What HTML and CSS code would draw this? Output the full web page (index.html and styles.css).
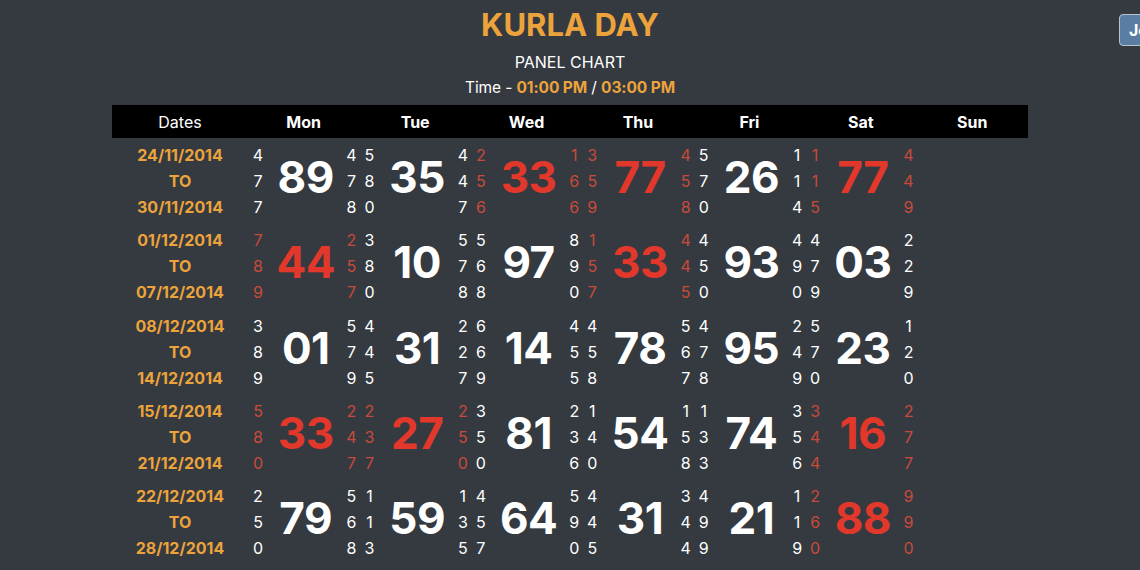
FILE: index.html
```html
<!DOCTYPE html>
<html lang="en">
<head>
<meta charset="utf-8">
<title>Kurla Day Panel Chart</title>
<link rel="stylesheet" href="styles.css">
</head>
<body>
<a class="join-btn" href="#">Join Now</a>
<header class="head">
  <h1 class="title">KURLA DAY</h1>
  <p class="sub">PANEL CHART</p>
  <p class="time">Time - <b>01:00 PM</b> / <b>03:00 PM</b></p>
</header>
<table class="chart">
  <thead>
    <tr><th class="dates-h">Dates</th><th>Mon</th><th>Tue</th><th>Wed</th><th>Thu</th><th>Fri</th><th>Sat</th><th>Sun</th></tr>
  </thead>
  <tbody>
    <tr>
      <td class="date">24/11/2014<br>TO<br>30/11/2014</td>
      <td><div class="cell"><span class="p">4<br>7<br>7</span><span class="j">89</span><span class="p">4<br>7<br>8</span></div></td>
      <td><div class="cell"><span class="p">5<br>8<br>0</span><span class="j">35</span><span class="p">4<br>4<br>7</span></div></td>
      <td><div class="cell red"><span class="p">2<br>5<br>6</span><span class="j">33</span><span class="p">1<br>6<br>6</span></div></td>
      <td><div class="cell red"><span class="p">3<br>5<br>9</span><span class="j">77</span><span class="p">4<br>5<br>8</span></div></td>
      <td><div class="cell"><span class="p">5<br>7<br>0</span><span class="j">26</span><span class="p">1<br>1<br>4</span></div></td>
      <td><div class="cell red"><span class="p">1<br>1<br>5</span><span class="j">77</span><span class="p">4<br>4<br>9</span></div></td>
      <td></td>
    </tr>
    <tr>
      <td class="date">01/12/2014<br>TO<br>07/12/2014</td>
      <td><div class="cell red"><span class="p">7<br>8<br>9</span><span class="j">44</span><span class="p">2<br>5<br>7</span></div></td>
      <td><div class="cell"><span class="p">3<br>8<br>0</span><span class="j">10</span><span class="p">5<br>7<br>8</span></div></td>
      <td><div class="cell"><span class="p">5<br>6<br>8</span><span class="j">97</span><span class="p">8<br>9<br>0</span></div></td>
      <td><div class="cell red"><span class="p">1<br>5<br>7</span><span class="j">33</span><span class="p">4<br>4<br>5</span></div></td>
      <td><div class="cell"><span class="p">4<br>5<br>0</span><span class="j">93</span><span class="p">4<br>9<br>0</span></div></td>
      <td><div class="cell"><span class="p">4<br>7<br>9</span><span class="j">03</span><span class="p">2<br>2<br>9</span></div></td>
      <td></td>
    </tr>
    <tr>
      <td class="date">08/12/2014<br>TO<br>14/12/2014</td>
      <td><div class="cell"><span class="p">3<br>8<br>9</span><span class="j">01</span><span class="p">5<br>7<br>9</span></div></td>
      <td><div class="cell"><span class="p">4<br>4<br>5</span><span class="j">31</span><span class="p">2<br>2<br>7</span></div></td>
      <td><div class="cell"><span class="p">6<br>6<br>9</span><span class="j">14</span><span class="p">4<br>5<br>5</span></div></td>
      <td><div class="cell"><span class="p">4<br>5<br>8</span><span class="j">78</span><span class="p">5<br>6<br>7</span></div></td>
      <td><div class="cell"><span class="p">4<br>7<br>8</span><span class="j">95</span><span class="p">2<br>4<br>9</span></div></td>
      <td><div class="cell"><span class="p">5<br>7<br>0</span><span class="j">23</span><span class="p">1<br>2<br>0</span></div></td>
      <td></td>
    </tr>
    <tr>
      <td class="date">15/12/2014<br>TO<br>21/12/2014</td>
      <td><div class="cell red"><span class="p">5<br>8<br>0</span><span class="j">33</span><span class="p">2<br>4<br>7</span></div></td>
      <td><div class="cell red"><span class="p">2<br>3<br>7</span><span class="j">27</span><span class="p">2<br>5<br>0</span></div></td>
      <td><div class="cell"><span class="p">3<br>5<br>0</span><span class="j">81</span><span class="p">2<br>3<br>6</span></div></td>
      <td><div class="cell"><span class="p">1<br>4<br>0</span><span class="j">54</span><span class="p">1<br>5<br>8</span></div></td>
      <td><div class="cell"><span class="p">1<br>3<br>3</span><span class="j">74</span><span class="p">3<br>5<br>6</span></div></td>
      <td><div class="cell red"><span class="p">3<br>4<br>4</span><span class="j">16</span><span class="p">2<br>7<br>7</span></div></td>
      <td></td>
    </tr>
    <tr>
      <td class="date">22/12/2014<br>TO<br>28/12/2014</td>
      <td><div class="cell"><span class="p">2<br>5<br>0</span><span class="j">79</span><span class="p">5<br>6<br>8</span></div></td>
      <td><div class="cell"><span class="p">1<br>1<br>3</span><span class="j">59</span><span class="p">1<br>3<br>5</span></div></td>
      <td><div class="cell"><span class="p">4<br>5<br>7</span><span class="j">64</span><span class="p">5<br>9<br>0</span></div></td>
      <td><div class="cell"><span class="p">4<br>4<br>5</span><span class="j">31</span><span class="p">3<br>4<br>4</span></div></td>
      <td><div class="cell"><span class="p">4<br>9<br>9</span><span class="j">21</span><span class="p">1<br>1<br>9</span></div></td>
      <td><div class="cell red"><span class="p">2<br>6<br>0</span><span class="j">88</span><span class="p">9<br>9<br>0</span></div></td>
      <td></td>
    </tr>
  </tbody>
</table>
</body>
</html>
```
FILE: styles.css
```css
html, body {
  margin: 0;
  padding: 0;
  overflow: hidden;
}
body {
  background: #343a40;
  color: #ffffff;
  font-family: "Inter", "Liberation Sans", sans-serif;
  min-height: 570px;
  position: relative;
}
.join-btn {
  position: absolute;
  left: 1119px;
  top: 14px;
  height: 32px;
  box-sizing: border-box;
  padding: 0 9px;
  display: flex;
  align-items: center;
  background: #5a7ea3;
  border: 1px solid #b9c3cc;
  border-radius: 4px;
  color: #fff;
  font-weight: 700;
  font-size: 16px;
  text-decoration: none;
  white-space: nowrap;
}
.head {
  text-align: center;
  padding-top: 6px;
}
.title {
  margin: 0;
  font-size: 31px;
  line-height: 38px;
  font-weight: 700;
  color: #eca33b;
}
.sub {
  margin: 8px 0 0;
  font-size: 16px;
  line-height: 20px;
}
.time {
  margin: 6px 0 0;
  font-size: 15.5px;
  line-height: 20px;
  letter-spacing: -0.1px;
}
.time b {
  color: #eca33b;
  font-weight: 700;
}
.chart {
  width: 916px;
  margin: 7px auto 0;
  border-collapse: collapse;
  table-layout: fixed;
}
.chart th {
  background: #000;
  height: 33px;
  padding: 0;
  font-size: 16px;
  font-weight: 700;
  text-align: center;
}
.chart th.dates-h {
  width: 136px;
  font-weight: 400;
}
.chart td {
  padding: 4px 0 3.33px;
  vertical-align: top;
}
.date {
  text-align: center;
  color: #eca33b;
  font-weight: 700;
  font-size: 16px;
  line-height: 26px;
}
.cell {
  display: grid;
  grid-template-columns: 20px 1fr 16px;
  align-items: center;
  font-size: 16px;
  line-height: 26px;
}
.p {
  text-align: center;
}
.j {
  text-align: center;
  font-size: 44px;
  font-weight: 700;
  line-height: 44px;
  padding-bottom: 8px;
  letter-spacing: -0.5px;
}
.cell.red .p {
  color: #c94a3b;
}
.cell.red .j {
  color: #e2382b;
}
```
